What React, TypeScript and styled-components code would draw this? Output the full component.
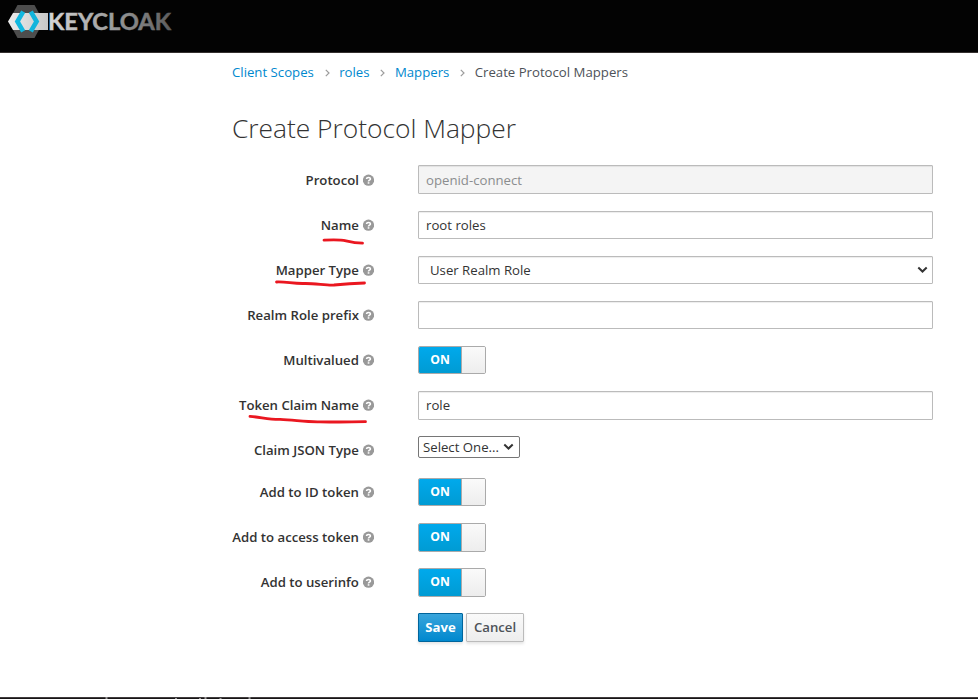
import React from "react";
import styled, { createGlobalStyle, css } from "styled-components";

const GlobalStyle = createGlobalStyle`
  * { box-sizing: border-box; }
  html, body { margin: 0; padding: 0; overflow: hidden; background: #fff; }
  body, input, select, button {
    font-family: "Open Sans", "Noto Sans", sans-serif;
    font-size: 13.2px;
    color: #333;
  }
`;

const Page = styled.div`
  display: flex;
  flex-direction: column;
  width: 978px;
  height: 699px;
`;

const Header = styled.header`
  flex: none;
  height: 53px;
  padding: 4px 0 0 8px;
  background: #030303;
  border-bottom: 1px solid #35302f;
`;

const Main = styled.main`
  flex: 1;
  padding: 9px 45px 0 232px;
`;

const Crumbs = styled.ol`
  display: flex;
  align-items: center;
  height: 19px;
  margin: 0;
  padding: 0;
  list-style: none;
  white-space: nowrap;
  color: #4d5258;
`;

const Crumb = styled.li`
  display: flex;
  align-items: center;
`;

const CrumbLink = styled.a`
  color: #0088ce;
  text-decoration: none;
`;

const CrumbArrow = styled.svg`
  margin: 2px 9.7px 0 10.7px;
`;

const Title = styled.h1`
  margin: 32px 0 0;
  height: 52.46875px;
  line-height: 31px;
  font-size: 26.4px;
  font-weight: 300;
  letter-spacing: -0.03px;
  white-space: nowrap;
`;

const Form = styled.form`
  display: flex;
  flex-direction: column;
  gap: 16.5px;
`;

const Row = styled.div<{ $short?: boolean }>`
  display: grid;
  grid-template-columns: 142px 515px;
  column-gap: 44px;
  height: ${(p) => (p.$short ? "25.375px" : "28.5625px")};
`;

const LabelCell = styled.div`
  position: relative;
  display: flex;
  justify-content: flex-end;
  align-items: center;
  gap: 3.7px;
  height: 28.6px;
  white-space: nowrap;
  font-weight: 600;
`;

const Marker = styled.svg`
  position: absolute;
  left: 0;
  top: 0;
  overflow: visible;
  pointer-events: none;
`;

const control = css`
  height: 28.75px;
  border: 1px solid #bbb;
  border-radius: 1px;
  background: #fff;
  outline: none;
`;

const TextInput = styled.input`
  ${control}
  width: 515px;
  padding: 2px 7px;
  box-shadow: inset 0 1px 1px rgba(0, 0, 0, 0.075);
  &:disabled {
    color: #8b8d8f;
    background: #f4f4f4;
  }
`;

const SelectBox = styled.div<{ $compact?: boolean }>`
  ${control}
  display: flex;
  align-items: center;
  justify-content: space-between;
  width: 515px;
  padding: 0 4px 0 11px;
  box-shadow: inset 0 1px 1px rgba(0, 0, 0, 0.075);
  white-space: nowrap;
  ${(p) =>
    p.$compact &&
    css`
      width: 102px;
      height: 22px;
      padding: 0 5px 0 4px;
      border-color: #767676;
      border-radius: 2px;
      box-shadow: none;
    `}
`;

const Switch = styled.div`
  display: flex;
  width: 68px;
  height: 28.75px;
  border: 1px solid #aaa;
  border-radius: 2px;
  overflow: hidden;
`;

const SwitchOn = styled.span`
  width: 42px;
  line-height: 25px;
  text-align: center;
  font-weight: 700;
  font-size: 12.2px;
  color: #fff;
  background: linear-gradient(#00a9ec, #009bd3);
`;

const SwitchHandle = styled.span`
  flex: 1;
  border-left: 1px solid #aaa;
  background: linear-gradient(#fafafa, #ededed);
`;

const Actions = styled.div`
  grid-column: 2;
  display: flex;
  gap: 3px;
`;

const Button = styled.button<{ $primary?: boolean }>`
  width: ${(p) => (p.$primary ? "45px" : "58px")};
  height: 28.75px;
  padding: 0 0 1px;
  font-weight: ${(p) => (p.$primary ? 700 : 600)};
  border: 1px solid ${(p) => (p.$primary ? "#00659c" : "#bbb")};
  border-radius: 1px;
  color: ${(p) => (p.$primary ? "#fff" : "#4d5258")};
  background: ${(p) => (p.$primary ? "linear-gradient(#39a5dc, #0088ce)" : "linear-gradient(#fafafa, #ededed)")};
  box-shadow: 0 2px 3px rgba(3, 3, 3, 0.1);
`;

const BottomEdge = styled.footer`
  flex: none;
  height: 2px;
  background: linear-gradient(#403c3d 50%, #171516 50%);
  svg { display: block; }
`;

const Logo = () => (
  <svg width="168" height="36" viewBox="8 4 168 36" role="img" aria-label="Keycloak">
    <defs>
      <linearGradient id="word" gradientUnits="userSpaceOnUse" x1="48" y1="0" x2="172" y2="0">
        <stop offset="0" stopColor="#d6d6d6" />
        <stop offset="0.55" stopColor="#989898" />
        <stop offset="1" stopColor="#5c5c5c" />
      </linearGradient>
      <linearGradient id="band" x1="0" x2="1">
        <stop offset="0" stopColor="#ededed" />
        <stop offset="1" stopColor="#c8c8c8" />
      </linearGradient>
    </defs>
    <path d="M17.5 5h17L43.5 21.5 34.5 38h-17L8.5 21.5z" fill="#4d4d4d" />
    <path d="M13 13h35v17H13L8 21.5z" fill="url(#band)" />
    <g fill="none" strokeWidth="4.6">
      <path d="M23.2 11.6L17.4 21.5l5.8 9.9" stroke="#12b8e0" />
      <path d="M30.8 11.6l5.8 9.9-5.8 9.9" stroke="#12b4dc" />
    </g>
    <text
      x="48"
      y="29.7"
      textLength="123"
      lengthAdjust="spacingAndGlyphs"
      fontFamily="Lato, sans-serif"
      fontWeight="700"
      fontSize="23.2"
      fill="url(#word)"
      stroke="url(#word)"
      strokeWidth="0.5"
    >
      KEYCLOAK
    </text>
  </svg>
);

const Help = () => (
  <svg width="11.4" height="12" viewBox="0 0 11.4 12" aria-hidden="true">
    <circle cx="5.5" cy="6.2" r="5.6" fill="#999" />
    <path d="M3.5 5c.2-2.1 4-2 3.9 0 0 1.2-1.9 1.1-1.9 2.4" fill="none" stroke="#fff" strokeWidth="1.6" />
    <rect x="4.7" y="8.2" width="1.7" height="1.5" fill="#fff" />
  </svg>
);

const Chevron = () => (
  <svg width="11" height="7" viewBox="0 0 11 7" aria-hidden="true">
    <path d="M1.3 1.5l4.2 4 4.2-4" fill="none" stroke="#333" strokeWidth="2" />
  </svg>
);

const Label = ({ text, mark }: { text: string; mark?: string }) => (
  <LabelCell>
    {text}
    <Help />
    {mark && (
      <Marker width="142" height="36" viewBox="0 0 142 36">
        <path d={mark} fill="none" stroke="#ea1720" strokeWidth="2.8" strokeLinecap="round" strokeLinejoin="round" />
      </Marker>
    )}
  </LabelCell>
);

const Toggle = () => (
  <Switch role="switch" aria-checked="true">
    <SwitchOn>ON</SwitchOn>
    <SwitchHandle />
  </Switch>
);

const trail = ["Client Scopes", "roles", "Mappers"];

export default function App() {
  return (
    <>
      <GlobalStyle />
      <Page>
        <Header>
          <Logo />
        </Header>
        <Main>
          <Crumbs>
            {trail.map((name) => (
              <Crumb key={name}>
                <CrumbLink>{name}</CrumbLink>
                <CrumbArrow width="5" height="8" viewBox="0 0 5 8">
                  <path d="M.8.8L4 4 .8 7.2" fill="none" stroke="#9c9c9c" strokeWidth="1.2" />
                </CrumbArrow>
              </Crumb>
            ))}
            <Crumb>Create Protocol Mappers</Crumb>
          </Crumbs>
          <Title>Create Protocol Mapper</Title>
          <Form>
            <Row>
              <Label text="Protocol" />
              <TextInput disabled defaultValue="openid-connect" />
            </Row>
            <Row>
              <Label text="Name" mark="M92 29.2C99 28.9 108 28.6 114 29.8C120 31.2 125 32 130.5 32.1" />
              <TextInput defaultValue="root roles" />
            </Row>
            <Row>
              <Label text="Mapper Type" mark="M44.5 26C54 25.5 61 27.8 72 27.5C83 27.2 94 29.5 102 29C114 27.8 122 27.3 132.5 27" />
              <SelectBox>
                User Realm Role
                <Chevron />
              </SelectBox>
            </Row>
            <Row>
              <Label text="Realm Role prefix" />
              <TextInput />
            </Row>
            <Row>
              <Label text="Multivalued" />
              <Toggle />
            </Row>
            <Row>
              <Label text="Token Claim Name" mark="M18 25.4C28 26 37 28.6 48 28.4C64 29.2 75 31.2 88 30.8C105 31.2 120 31 133.5 30.7" />
              <TextInput defaultValue="role" />
            </Row>
            <Row $short>
              <Label text="Claim JSON Type" />
              <SelectBox $compact>
                Select One...
                <Chevron />
              </SelectBox>
            </Row>
            {["Add to ID token", "Add to access token", "Add to userinfo"].map((text) => (
              <Row key={text}>
                <Label text={text} />
                <Toggle />
              </Row>
            ))}
            <Row>
              <Actions>
                <Button type="button" $primary>
                  Save
                </Button>
                <Button type="button">Cancel</Button>
              </Actions>
            </Row>
          </Form>
        </Main>
        <BottomEdge>
          <svg width="330" height="2" viewBox="0 0 330 2" aria-hidden="true">
            <path d="M106.5 0v2M205.5 0v2M249.5 0v2M176 1v1M200 1v1M220.5 1v1" stroke="#989596" strokeWidth="2" />
          </svg>
        </BottomEdge>
      </Page>
    </>
  );
}
